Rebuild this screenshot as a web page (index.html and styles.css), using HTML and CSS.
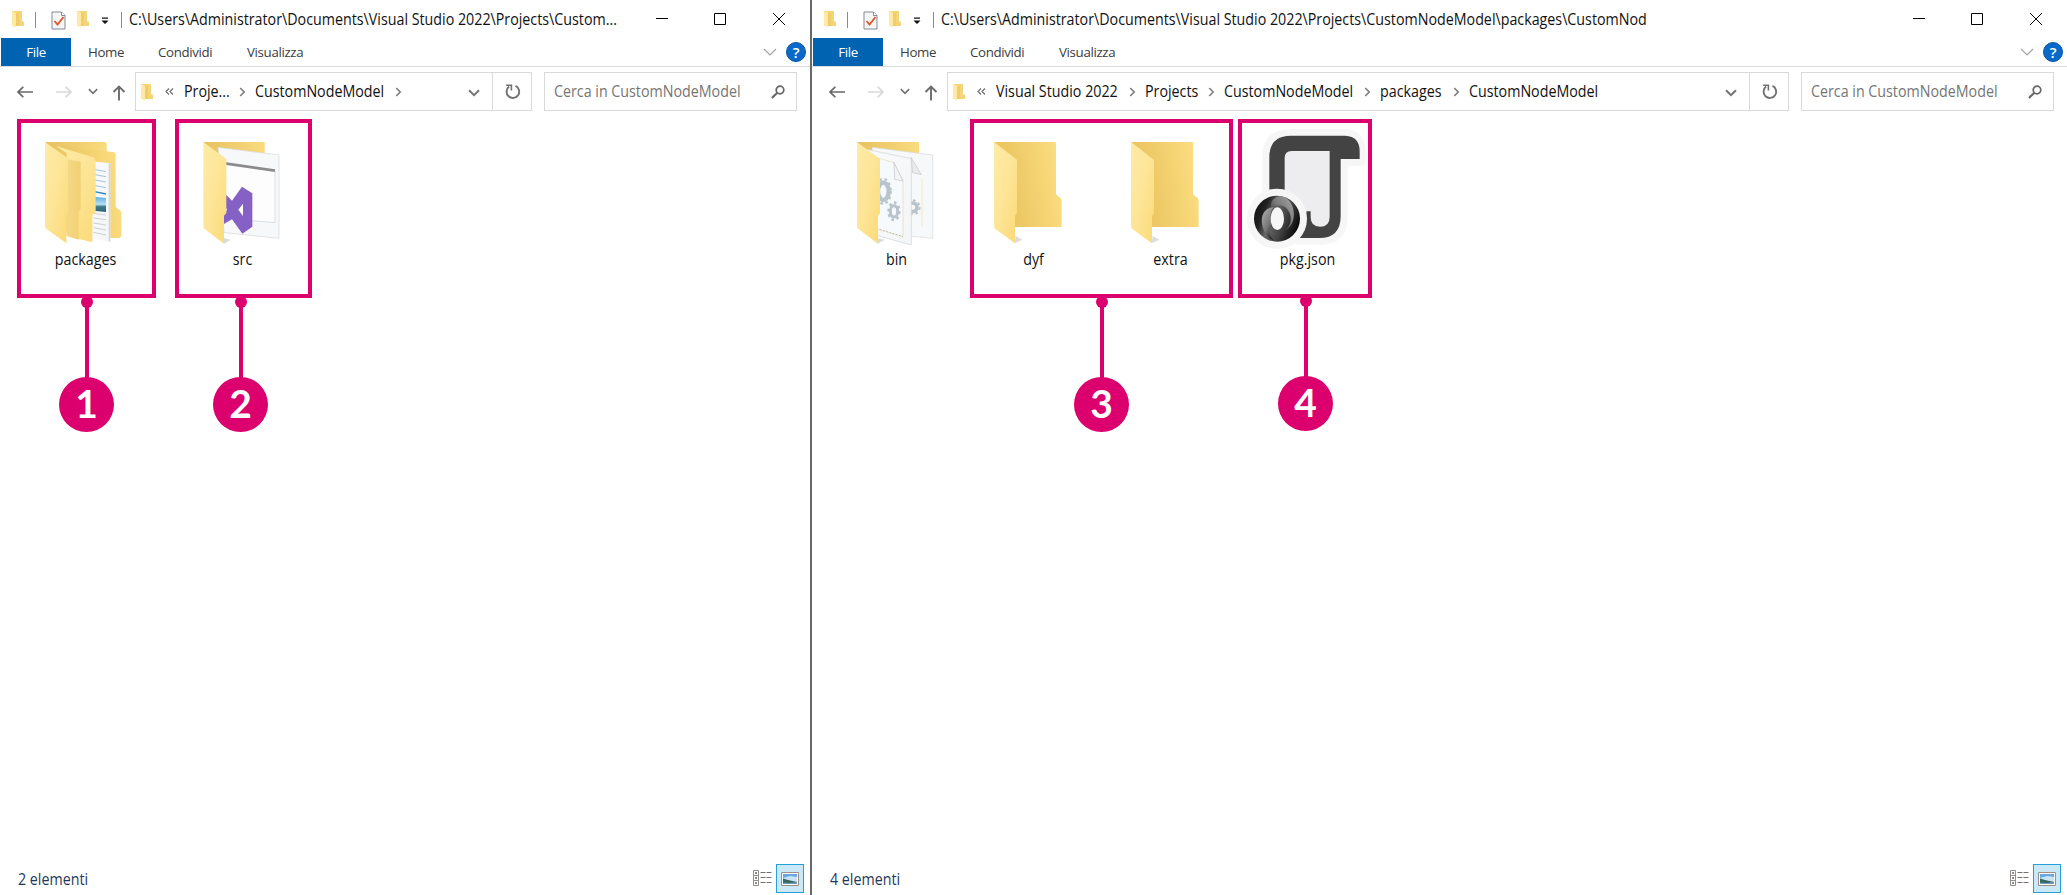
FILE: index.html
```html
<!DOCTYPE html>
<html lang="it">
<head>
<meta charset="utf-8">
<title>CustomNodeModel</title>
<link rel="stylesheet" href="styles.css">
</head>
<body>
<svg class="defs" width="0" height="0">
  <defs>
    <linearGradient id="flap" x1="0" y1="0" x2="1" y2="1"><stop offset="0" stop-color="#ffeba6"/><stop offset="0.5" stop-color="#fde597"/><stop offset="1" stop-color="#fbd975"/></linearGradient>
    <linearGradient id="back" x1="0" y1="0.6" x2="1" y2="0.4"><stop offset="0.25" stop-color="#ecc763"/><stop offset="1" stop-color="#fbdd80"/></linearGradient>
    <linearGradient id="backTop" x1="0" y1="0" x2="1" y2="0"><stop offset="0" stop-color="#e6c160"/><stop offset="1" stop-color="#fadb7d"/></linearGradient>
    <linearGradient id="strip" x1="0" y1="0" x2="1" y2="0"><stop offset="0" stop-color="#f5d988"/><stop offset="1" stop-color="#f2d072"/></linearGradient>
    <linearGradient id="paper" x1="0" y1="0" x2="1" y2="1"><stop offset="0" stop-color="#f9fafb"/><stop offset="1" stop-color="#f3f5f6"/></linearGradient>
    <linearGradient id="shade" x1="0" y1="0" x2="1" y2="0"><stop offset="0" stop-color="#d8d8d8"/><stop offset="1" stop-color="#fff" stop-opacity="0"/></linearGradient>
    <linearGradient id="photo" x1="0" y1="0" x2="0" y2="1"><stop offset="0" stop-color="#5aabe4"/><stop offset="0.5" stop-color="#b9e0f2"/><stop offset="0.65" stop-color="#3f7d8b"/><stop offset="1" stop-color="#2c6378"/></linearGradient>
    <linearGradient id="ringA" x1="0" y1="0.3" x2="1" y2="0.7"><stop offset="0" stop-color="#111"/><stop offset="0.2" stop-color="#222"/><stop offset="0.4" stop-color="#666"/><stop offset="0.65" stop-color="#444"/><stop offset="1" stop-color="#000"/></linearGradient>
    <linearGradient id="ringB" x1="0" y1="1" x2="1" y2="0"><stop offset="0" stop-color="#111"/><stop offset="0.5" stop-color="#777"/><stop offset="1" stop-color="#aaa"/></linearGradient>
    <linearGradient id="ringC" x1="0" y1="0" x2="0.7" y2="1"><stop offset="0" stop-color="#b4b4b4"/><stop offset="0.6" stop-color="#777"/><stop offset="1" stop-color="#161616"/></linearGradient>
    <symbol id="i-folder" viewBox="0 0 14 18"><path d="M1 1h10v10l2 1v4H1z" fill="#f5d577"/><path d="M1 1l4 2v14.500l-4-2z" fill="#ffe9a4"/><path d="M5 3h3v13H5z" fill="#efcd6b"/></symbol>
    <symbol id="i-doc" viewBox="0 0 15 19"><path d="M1 1h9.500L14 4.500V18H1z" fill="#f6f6f6" stroke="#858b91"/><path d="M10.500 1v3.500H14" fill="#fff" stroke="#858b91"/><path d="M3.500 10l3 3.500 6-7.500" fill="none" stroke="#e4582c" stroke-width="1.900"/></symbol>
    <symbol id="i-drop" viewBox="0 0 8 8"><path d="M1 .5h6v1.300H1zM.5 3.500h7L4 7z" fill="#111"/></symbol>
    <symbol id="i-min" viewBox="0 0 14 14"><path d="M2 6.500h12" stroke="#000"/></symbol>
    <symbol id="i-max" viewBox="0 0 14 14"><path d="M1.500 1.500h11v11h-11z" fill="none" stroke="#000"/></symbol>
    <symbol id="i-close" viewBox="0 0 14 14"><path d="M1 1l12 12M13 1L1 13" stroke="#000"/></symbol>
    <symbol id="i-chev" viewBox="0 0 14 8"><path d="M1 1l6 6 6-6" fill="none" stroke="#a3a3a3" stroke-width="1.200"/></symbol>
    <symbol id="i-back" viewBox="0 0 16 12"><path d="M1 6h15M6.300 .8L1 6l5.300 5.200" fill="none" stroke="currentColor" stroke-width="1.700"/></symbol>
    <symbol id="i-down" viewBox="0 0 12 8"><path d="M1 1.200l5 5 5-5" fill="none" stroke="#747474" stroke-width="2"/></symbol>
    <symbol id="i-up" viewBox="0 0 14 16"><path d="M7 15.500V1.500M1.500 7L7 1.500 12.500 7" fill="none" stroke="#6c6c6c" stroke-width="1.900"/></symbol>
    <symbol id="i-crumb" viewBox="0 0 7 10"><path d="M1.200 1l4 4-4 4" fill="none" stroke="#808080" stroke-width="1.700"/></symbol>
    <symbol id="i-more" viewBox="0 0 9 7"><path d="M4 .5l-3 3 3 3M8 .5l-3 3 3 3" fill="none" stroke="#6e6e6e" stroke-width="1.200"/></symbol>
    <symbol id="i-refresh" viewBox="0 0 16 16"><path d="M10.500 1.900A6.300 6.300 0 1 1 4.100 2.600" fill="none" stroke="#717171" stroke-width="1.900"/><path d="M1.200 1.200h5.200v5.300" fill="none" stroke="#717171" stroke-width="1.600"/></symbol>
    <symbol id="i-search" viewBox="0 0 14 14"><circle cx="9" cy="5" r="3.800" fill="none" stroke="#666" stroke-width="1.700"/><path d="M6.300 7.700L.9 13" stroke="#666" stroke-width="2.100"/></symbol>
    <symbol id="i-list" viewBox="0 0 19 17"><path d="M.5.5h5v15h-5zM.5 5.500h5M.5 10.500h5" fill="#fff" stroke="#938e8b"/><path d="M2.300 2.300h1.500v1.500H2.300zM2.300 7.300h1.500v1.500H2.300zM2.300 12.300h1.500v1.500H2.300z" fill="#333"/><path d="M7.500 2.500h5m1 0h5M7.500 7.500h5m1 0h5M7.500 12.500h5m1 0h5" stroke="#77706e"/></symbol>
    <symbol id="i-thumb" viewBox="0 0 18 14"><path d="M.5.5h17v13H.5z" fill="#fff" stroke="#a18f87"/><path d="M2 2h14v10H2z" fill="#c9e5f5"/><path d="M2 2h14v3L9 4 2 6z" fill="#6aa7e0"/><path d="M2 6.500l5 1.500 9 2v2H2z" fill="#35665f"/><path d="M2 10.500l6 .5 8-1v2H2z" fill="#6d9bbb"/></symbol>
  </defs>
</svg>

<div class="desktop">
  <section class="window window-left">
    <header class="titlebar">
      <svg class="folder"><use href="#i-folder"/></svg><i class="sep"></i>
      <svg class="doc"><use href="#i-doc"/></svg><svg class="folder quick"><use href="#i-folder"/></svg>
      <svg class="drop"><use href="#i-drop"/></svg><i class="sep sep-title"></i>
      <span class="title">C:\Users\Administrator\Documents\Visual Studio 2022\Projects\Custom...</span>
      <div class="controls"><svg><use href="#i-min"/></svg><svg><use href="#i-max"/></svg><svg><use href="#i-close"/></svg></div>
    </header>
    <nav class="ribbon">
      <span class="tab tab-file">File</span><span class="tab tab-home">Home</span><span class="tab tab-share">Condividi</span><span class="tab">Visualizza</span>
      <div class="ribbon-end"><svg class="chev"><use href="#i-chev"/></svg><span class="help">?</span></div>
    </nav>
    <div class="navbar">
      <div class="arrows"><svg class="back"><use href="#i-back"/></svg><svg class="forward"><use href="#i-back"/></svg><svg class="recent"><use href="#i-down"/></svg><svg class="up"><use href="#i-up"/></svg></div>
      <div class="address">
        <svg class="folder"><use href="#i-folder"/></svg><svg class="more"><use href="#i-more"/></svg>
        <span class="crumb crumb-short">Proje...</span><svg class="crumb-sep"><use href="#i-crumb"/></svg>
        <span class="crumb crumb-model">CustomNodeModel</span><svg class="crumb-sep"><use href="#i-crumb"/></svg>
        <svg class="expand"><use href="#i-down"/></svg>
        <div class="refresh"><svg><use href="#i-refresh"/></svg></div>
      </div>
      <div class="search"><span>Cerca in CustomNodeModel</span><svg><use href="#i-search"/></svg></div>
    </div>
    <main class="files files-left">
      <figure class="item">
        <svg class="icon" viewBox="51 51 411 366">
          <path d="M135 96H315Q320 97 320 104V370H200z" fill="url(#backTop)"/>
          <path d="M168 108L340 126Q347 127 347 134V291L361 302Q364 305 364 312V379L358 384H250z" fill="url(#back)"/>
          <path d="M270 153L331 160V396L270 384z" fill="url(#paper)"/><path d="M326 160L331 160V396L326 394z" fill="#d3d6d9"/>
          <path d="M280 178l38 7M280 193l38 7M280 209l38 7M280 226l38 7" stroke="#91b7da" stroke-width="2.500"/>
          <path d="M280 244l38 8" stroke="#3288c4" stroke-width="4"/><path d="M280 260l38 4v42l-38-4z" fill="url(#photo)"/>
          <path d="M280 310l38 5M280 324l38 5M280 339l38 6M280 353l38 7M280 367l38 8" stroke="#c2c7ce" stroke-width="2.500"/>
          <path d="M168 108L280 142Q287 145 287 156V307L277 316V397L200 378V130z" fill="url(#flap)"/>
          <path d="M204 148L242 155V296L236 306V389L200 378z" fill="url(#strip)"/>
          <path d="M135 96L204 145V309L199 317V400L139 357Q135 354 135 349z" fill="url(#flap)"/>
        </svg>
        <figcaption>packages</figcaption>
      </figure>
      <figure class="item">
        <svg class="icon" viewBox="522 51 411 366">
          <path d="M836 367L862 371 836 384zM672 385L693 389 672 401z" fill="url(#shade)"/>
          <path d="M610 96H794V160H640z" fill="url(#backTop)"/>
          <path d="M654 112L837 135V385L672 368z" fill="#f7f8f9" stroke="#d5d6d7" stroke-width="2"/>
          <path d="M674 160L825 182V338L674 325z" fill="#fdfdfe" stroke="#bfc1c4" stroke-width="1.500"/>
          <path d="M674 160L825 182" stroke="#8b8b8d" stroke-width="8"/>
          <path d="M668 244L696 272 726 230 757 250V350L727 371 696 328 668 344zM715 299L729 318V281zM668 275V321L681 299z" fill="#8661c5" fill-rule="evenodd"/>
          <path d="M610 96L679 147V309L672 317V401L613 356Q610 354 610 349z" fill="url(#flap)"/>
        </svg>
        <figcaption>src</figcaption>
      </figure>
    </main>
    <footer class="status"><span>2 elementi</span><svg class="list"><use href="#i-list"/></svg><span class="view"><svg><use href="#i-thumb"/></svg></span></footer>
  </section>

  <section class="window window-right">
    <header class="titlebar">
      <svg class="folder"><use href="#i-folder"/></svg><i class="sep"></i>
      <svg class="doc"><use href="#i-doc"/></svg><svg class="folder quick"><use href="#i-folder"/></svg>
      <svg class="drop"><use href="#i-drop"/></svg><i class="sep sep-title"></i>
      <span class="title">C:\Users\Administrator\Documents\Visual Studio 2022\Projects\CustomNodeModel\packages\CustomNod</span>
      <div class="controls"><svg><use href="#i-min"/></svg><svg><use href="#i-max"/></svg><svg><use href="#i-close"/></svg></div>
    </header>
    <nav class="ribbon">
      <span class="tab tab-file">File</span><span class="tab tab-home">Home</span><span class="tab tab-share">Condividi</span><span class="tab">Visualizza</span>
      <div class="ribbon-end"><svg class="chev"><use href="#i-chev"/></svg><span class="help">?</span></div>
    </nav>
    <div class="navbar">
      <div class="arrows"><svg class="back"><use href="#i-back"/></svg><svg class="forward"><use href="#i-back"/></svg><svg class="recent"><use href="#i-down"/></svg><svg class="up"><use href="#i-up"/></svg></div>
      <div class="address">
        <svg class="folder"><use href="#i-folder"/></svg><svg class="more"><use href="#i-more"/></svg>
        <span class="crumb crumb-studio">Visual Studio 2022</span><svg class="crumb-sep"><use href="#i-crumb"/></svg>
        <span class="crumb crumb-projects">Projects</span><svg class="crumb-sep"><use href="#i-crumb"/></svg>
        <span class="crumb crumb-model">CustomNodeModel</span><svg class="crumb-sep"><use href="#i-crumb"/></svg>
        <span class="crumb crumb-packages">packages</span><svg class="crumb-sep"><use href="#i-crumb"/></svg>
        <span class="crumb crumb-model">CustomNodeModel</span>
        <svg class="expand"><use href="#i-down"/></svg>
        <div class="refresh"><svg><use href="#i-refresh"/></svg></div>
      </div>
      <div class="search"><span>Cerca in CustomNodeModel</span><svg><use href="#i-search"/></svg></div>
    </div>
    <main class="files">
      <figure class="item">
        <svg class="icon" viewBox="-36 51 411 366">
          <path d="M278 367L306 371 278 384zM113 385L135 389 113 401z" fill="url(#shade)"/>
          <path d="M51 96H237V160H80z" fill="url(#backTop)"/>
          <path d="M96 112L278 135V385L110 368z" fill="#f7f8f9" stroke="#d6d8da" stroke-width="2"/>
          <path d="M246 205V350" stroke="#f2dfb0" stroke-width="2"/><path d="M213 142L244 194 218 188z" fill="#e9ebed" stroke="#c3c5c8" stroke-width="2"/>
          <circle cx="218" cy="292" r="13" fill="none" stroke="#b8c3cc" stroke-width="11"/><circle cx="218" cy="292" r="21" fill="none" stroke="#b8c3cc" stroke-width="6" stroke-dasharray="8 8.500"/>
          <path d="M80 118L214 146V405L110 376z" fill="url(#paper)" stroke="#cfd2d5" stroke-width="2"/>
          <path d="M118 145L162 158 189 213V380L110 356z" fill="#f7fafc" stroke="#e6d8b9" stroke-width="2"/><path d="M110 356L189 380" stroke="#888" stroke-width="1.500" stroke-dasharray="5 5"/>
          <path d="M162 158L189 213 164 208z" fill="#f4f4f4" stroke="#c1c3c6" stroke-width="2"/>
          <ellipse cx="130" cy="244" rx="16" ry="26" fill="none" stroke="#b8c3cc" stroke-width="13"/><ellipse cx="130" cy="244" rx="22" ry="37" fill="none" stroke="#b8c3cc" stroke-width="7" stroke-dasharray="8 8"/>
          <ellipse cx="162" cy="304" rx="11" ry="17" fill="none" stroke="#b8c3cc" stroke-width="9"/><ellipse cx="162" cy="304" rx="16" ry="26" fill="none" stroke="#b8c3cc" stroke-width="8" stroke-dasharray="8 8.500"/>
          <path d="M51 96L120 147V309L114 317V401L54 356Q51 354 51 349z" fill="url(#flap)"/>
        </svg>
        <figcaption>bin</figcaption>
      </figure>
      <figure class="item">
        <svg class="icon" viewBox="375 51 411 366">
          <path d="M665 330L687 339 665 349zM527 378L548 389 525 399z" fill="url(#shade)"/>
          <path d="M462 96H645Q648 96 648 100V253L662 265Q665 268 665 275V348Q665 351 661 351H500z" fill="url(#back)"/>
          <path d="M462 96L531 149V309L525 317V400L465 356Q462 354 462 349z" fill="url(#flap)"/>
        </svg>
        <figcaption>dyf</figcaption>
      </figure>
      <figure class="item">
        <svg class="icon" viewBox="375 51 411 366">
          <path d="M665 330L687 339 665 349zM527 378L548 389 525 399z" fill="url(#shade)"/>
          <path d="M462 96H645Q648 96 648 100V253L662 265Q665 268 665 275V348Q665 351 661 351H500z" fill="url(#back)"/>
          <path d="M462 96L531 149V309L525 317V400L465 356Q462 354 462 349z" fill="url(#flap)"/>
        </svg>
        <figcaption>extra</figcaption>
      </figure>
      <figure class="item">
        <svg class="icon" viewBox="387 51 411 366">
          <path d="M457 245V142Q457 57 545 57H706Q768 60 768 130V154Q768 168 754 168H713V320Q713 404 630 404H560z" fill="#f6f6f6"/>
          <circle cx="501" cy="326" r="90" fill="#f6f6f6"/>
          <path d="M524 124H660V352H590L524 280z" fill="#ededef"/>
          <path d="M478 260V142Q478 77 543 77H706Q749 79 749 124V147H692V318Q692 384 628 384H560L590 304H602V322Q602 350 630 350Q659 350 659 320V123H545Q524 123 524 144V260z" fill="#434343"/>
          <circle cx="501" cy="326" r="90" fill="#f6f6f6"/>
          <circle cx="501" cy="326" r="69" fill="url(#ringA)"/>
          <path d="M484 292C540 264 561 342 524 360C568 345 557 258 508 259C492 262 480 275 484 292z" fill="url(#ringB)"/>
          <path d="M494 291C436 294 450 374 492 392C470 370 475 350 489 350C476 331 481 297 494 291z" fill="url(#ringC)"/>
          <ellipse cx="502" cy="326" rx="20" ry="34" fill="#f6f6f6"/>
        </svg>
        <figcaption>pkg.json</figcaption>
      </figure>
    </main>
    <footer class="status"><span>4 elementi</span><svg class="list"><use href="#i-list"/></svg><span class="view"><svg><use href="#i-thumb"/></svg></span></footer>
  </section>

  <div class="frame frame-1"></div><div class="frame frame-2"></div><div class="frame frame-3"></div><div class="frame frame-4"></div>
  <div class="callout callout-1"><i class="dot"></i><i class="stem"></i><b>1</b></div>
  <div class="callout callout-2"><i class="dot"></i><i class="stem"></i><b>2</b></div>
  <div class="callout callout-3"><i class="dot"></i><i class="stem"></i><b>3</b></div>
  <div class="callout callout-4"><i class="dot"></i><i class="stem"></i><b>4</b></div>
</div>
</body>
</html>
```
FILE: styles.css
```css
* { box-sizing: border-box; }
body { margin: 0; background: #fff; color: #111; font: 15.5px/20px "Open Sans", "Noto Sans", sans-serif; }
svg { display: block; flex: none; }
.defs { position: absolute; }
.desktop { position: relative; display: flex; width: 2067px; height: 895px; overflow: hidden; }
.window { display: flex; flex-direction: column; height: 895px; white-space: nowrap; }
.window-left { width: 812px; border-right: 2px solid #66686a; }
.window-right { width: 1255px; }

/* Slightly condensed interface lettering */
.title, .crumb, .search span, .status > span:first-child { transform: scaleX(0.92); transform-origin: left; }
figcaption { transform: scaleX(0.92); }

.titlebar { display: flex; align-items: center; height: 38px; padding-left: 11px; }
.folder { width: 14px; height: 18px; }
.sep { width: 1px; height: 16px; margin: 2px 15px 0 10px; background: #8b8b8b; }
.doc { width: 15px; height: 19px; margin-top: 2px; }
.quick { margin-left: 10px; }
.drop { width: 8px; height: 8px; margin: 3px 0 0 11px; }
.sep-title { margin: 2px 7px 0 12px; }
.title { width: 0; }
.controls { display: flex; gap: 45px; margin-left: auto; padding-right: 24px; }
.controls svg { width: 14px; height: 14px; }

.ribbon { display: flex; height: 29px; padding-left: 1px; border-bottom: 1px solid #dadbdc; font-size: 13.3px; line-height: 28px; letter-spacing: -0.35px; color: #3c3c3c; }
.tab-file { width: 70px; background: #0063b1; color: #fff; text-align: center; }
.tab-home { width: 87px; padding-left: 17px; }
.tab-share { width: 89px; }
.ribbon-end { display: flex; align-items: center; gap: 9px; margin-left: auto; padding-right: 4px; }
.chev { width: 14px; height: 8px; }
.help { width: 20px; height: 20px; border: 1px solid #0b55a3; border-radius: 50%; background: #0a6acb; color: #fff; font-size: 15px; font-weight: 600; line-height: 18px; text-align: center; }

.navbar { display: flex; height: 44px; padding: 5px 13px 0 17px; }
.arrows { display: flex; align-items: center; width: 118px; height: 39px; }
.back { width: 16px; height: 12px; color: #686868; }
.forward { width: 16px; height: 12px; margin-left: 23px; color: #d9d9d9; transform: scaleX(-1); }
.recent { width: 10px; height: 7px; margin-left: 16px; }
.up { width: 14px; height: 16px; margin: 3px 0 0 14px; }
.address { display: flex; flex: 1; align-items: center; height: 39px; padding-left: 4px; border: 1px solid #d9d9d9; }
.more { width: 9px; height: 7px; margin: 0 10px 0 11px; }
.crumb { flex: none; padding-bottom: 2px; }
.crumb-short { width: 44px; }
.crumb-studio { width: 122px; }
.crumb-projects { width: 52px; }
.crumb-model { width: 129px; }
.crumb-packages { width: 62px; }
.crumb-sep { width: 7px; height: 10px; margin: 0 9px 0 11px; }
.expand { width: 12px; height: 8px; margin: 3px 12px 0 auto; }
.refresh { display: flex; align-items: center; width: 39px; height: 37px; padding-left: 12px; border-left: 1px solid #d9d9d9; }
.refresh svg { width: 16px; height: 16px; }
.search { display: flex; align-items: center; justify-content: space-between; width: 253px; height: 39px; margin-left: 12px; padding: 0 11px 0 9px; border: 1px solid #d9d9d9; color: #757575; }
.search span { padding-bottom: 2px; }
.search svg { width: 14px; height: 14px; }

.files { display: flex; flex: 1; padding: 16px 0 0 16px; }
.files-left { gap: 20px; padding-left: 17px; }
.item { width: 137px; margin: 0; text-align: center; }
.icon { width: 137px; height: 122px; }
figcaption { line-height: 21px; }

.status { display: flex; align-items: center; height: 31px; padding: 0 6px 2px 18px; color: #1e395b; }
.list { width: 19px; height: 17px; margin-left: auto; }
.view { display: flex; align-items: center; justify-content: center; width: 28px; height: 29px; margin-left: 4px; border: 1px solid #26a0da; background: #cbe8f6; }
.view svg { width: 18px; height: 14px; }

.frame { position: absolute; top: 119px; height: 179px; border: 4px solid #dc006e; }
.frame-1 { left: 17px; width: 139px; }
.frame-2 { left: 175px; width: 137px; }
.frame-3 { left: 970px; width: 263px; }
.frame-4 { left: 1238px; width: 134px; }
.callout { position: absolute; top: 296px; display: flex; flex-direction: column; align-items: center; width: 55px; color: #fff; }
.callout-1 { left: 59px; }
.callout-2 { left: 213px; }
.callout-3 { left: 1074px; }
.callout-4 { left: 1278px; top: 295px; }
.dot { width: 12px; height: 12px; border-radius: 50%; background: #dc006e; }
.stem { width: 4px; height: 75px; margin: -4px 0 -2px; background: #dc006e; }
.callout b { width: 55px; height: 55px; border-radius: 50%; background: #dc006e; font: 700 39px/53px Lato, sans-serif; text-align: center; }
```
